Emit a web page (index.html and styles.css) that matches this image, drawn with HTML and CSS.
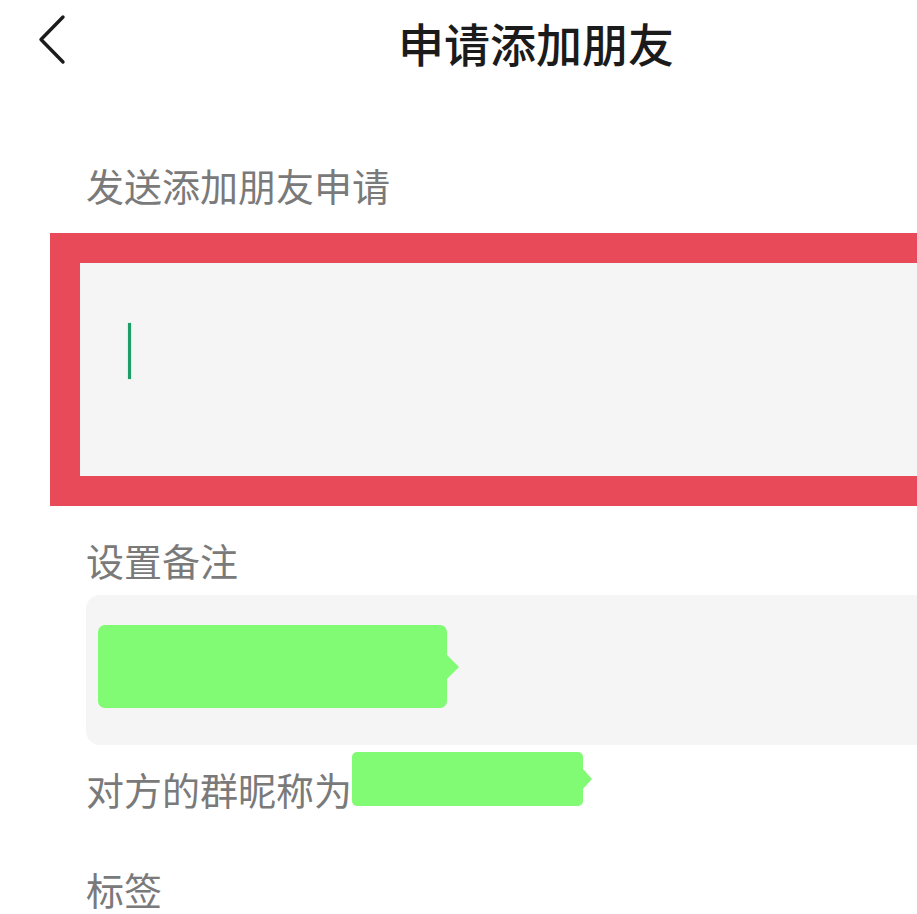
FILE: index.html
```html
<!DOCTYPE html>
<html lang="zh-CN">
<head>
<meta charset="utf-8">
<title>申请添加朋友</title>
<link rel="stylesheet" href="styles.css">
</head>
<body>
<div class="page">
  <header class="header">
    <svg class="back" width="30" height="52" viewBox="0 0 30 52" aria-hidden="true">
      <path d="M25 3 L3 25.5 L25 48" fill="none" stroke="#1c1c1c" stroke-width="3.4" stroke-linecap="round" stroke-linejoin="round"/>
    </svg>
    <h1 class="title">申请添加朋友</h1>
  </header>

  <div class="label label-first">发送添加朋友申请</div>
  <div class="request-box">
    <div class="cursor"></div>
  </div>

  <div class="label label-remark">设置备注</div>
  <div class="remark-box">
    <div class="mask mask-large"></div>
  </div>

  <div class="nick-row">
    <span class="nick-text">对方的群昵称为</span>
    <span class="mask mask-small"></span>
  </div>

  <div class="label label-tag">标签</div>
</div>
</body>
</html>
```

FILE: styles.css
```css
html, body {
  margin: 0;
  padding: 0;
  background: #ffffff;
}

.page {
  font-family: "Noto Sans CJK SC", "Noto Sans", sans-serif;
  overflow: hidden;
  height: 914px;
}

.header {
  display: flex;
  align-items: flex-start;
  padding: 14px 0 0 38px;
  height: 52px;
}

.back {
  display: block;
  flex: none;
}

.title {
  margin: 5px 0 0 330px;
  font-size: 46px;
  line-height: 46px;
  font-weight: 500;
  color: #1b1b1b;
  white-space: nowrap;
}

.label {
  margin-left: 86px;
  font-size: 38px;
  line-height: 38px;
  color: #7a7a7a;
  white-space: nowrap;
}

.label-first {
  margin-top: 100px;
}

.request-box {
  margin: 29px 0 0 50px;
  border: 30px solid #e94a59;
  border-right: none;
  background: #f5f5f5;
  height: 213px;
  box-sizing: content-box;
  overflow: hidden;
}

.cursor {
  margin: 60px 0 0 48px;
  width: 3px;
  height: 56px;
  background: #1e9c68;
  box-shadow: 0 0 2px rgba(60, 230, 150, 0.5);
}

.label-remark {
  margin-top: 35px;
}

.remark-box {
  margin: 16px 0 0 86px;
  height: 150px;
  box-sizing: border-box;
  padding: 30px 0 0 12px;
  background: #f5f5f5;
  border-radius: 14px 0 0 14px;
}

.mask {
  display: block;
  position: relative;
  background: #80fb73;
}

.mask::after {
  content: "";
  position: absolute;
  top: 50%;
  left: 100%;
  width: 0;
  height: 0;
  transform: translateY(-50%);
  border-style: solid;
  border-color: transparent transparent transparent #80fb73;
}

.mask-large {
  width: 349px;
  height: 83px;
  border-radius: 7px;
}

.mask-large::after {
  border-width: 12px 0 12px 12px;
}

.nick-row {
  display: flex;
  align-items: flex-start;
  margin: 7px 0 0 86px;
}

.nick-text {
  margin-top: 18px;
  font-size: 38px;
  line-height: 38px;
  color: #7a7a7a;
  white-space: nowrap;
}

.mask-small {
  flex: none;
  width: 231px;
  height: 54px;
  border-radius: 5px;
}

.mask-small::after {
  border-width: 10px 0 10px 9px;
}

.label-tag {
  margin-top: 62px;
}
```
